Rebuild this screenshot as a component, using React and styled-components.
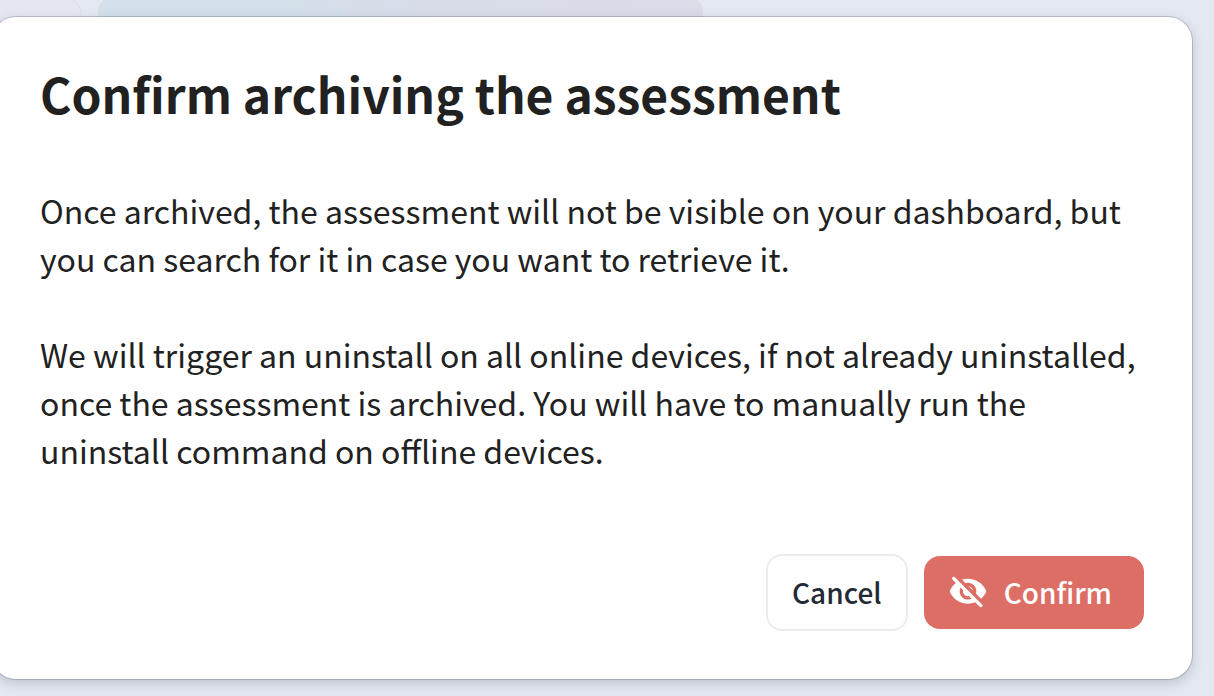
import React from "react";
import styled, { createGlobalStyle } from "styled-components";

const GlobalStyle = createGlobalStyle`
  *, *::before, *::after { box-sizing: border-box; }
  body {
    margin: 0;
    background: #e4e8f1;
    font-family: "Noto Sans CJK JP", "Noto Sans", sans-serif;
    color: #212121;
  }
`;

const Page = styled.div`
  position: relative;
  min-height: 100vh;
  overflow: hidden;
  padding: 17px 22px 17px 0;
`;

const Backdrop = styled.div`
  position: absolute;
  top: -4px;
  left: 0;
  right: 0;
  height: 80px;
  display: flex;
  gap: 16px;
`;

const SideCard = styled.div`
  width: 82px;
  border: 1px solid #dcdfe9;
  border-left: 0;
  border-radius: 0 20px 0 0;
  background: #e4e7f1;
`;

const BannerCard = styled.div`
  flex: 0 0 605px;
  border-radius: 16px 16px 0 0;
  background: linear-gradient(90deg, #d3e0eb 0%, #d3dfea 30%, #d8dce9 55%, #dadce8 100%);
`;

const Dialog = styled.section`
  position: relative;
  margin-left: -8px;
  padding: 44px 48px 48px;
  border-radius: 24px;
  background: #fff;
  box-shadow: 0 0 0 1px rgba(60, 65, 80, 0.24), 0 4px 12px rgba(60, 65, 80, 0.24);
`;

const Title = styled.h1`
  margin: 0;
  font-size: 48px;
  font-weight: 700;
  line-height: 64px;
`;

const Message = styled.div`
  margin-top: 61px;
  display: grid;
  gap: 48px;
`;

const Paragraph = styled.p`
  margin: 0;
  font-size: 32px;
  line-height: 48px;
`;

const Actions = styled.footer`
  margin-top: 80px;
  display: flex;
  justify-content: flex-end;
  align-items: center;
  gap: 16px;
`;

const Button = styled.button`
  display: flex;
  align-items: center;
  justify-content: center;
  gap: 16px;
  height: ${({ $danger }) => ($danger ? 73 : 77)}px;
  padding: ${({ $danger }) => ($danger ? "0 32px 2px 24px" : "0 24px 2px")};
  border: ${({ $danger }) => ($danger ? "0" : "2px solid #ececec")};
  border-radius: 16px;
  background: ${({ $danger }) => ($danger ? "#dd6e66" : "#fff")};
  color: ${({ $danger }) => ($danger ? "#fff" : "#242a35")};
  font-family: inherit;
  font-size: 28px;
  font-weight: 500;
  line-height: 40px;
  cursor: pointer;
`;

const Icon = styled.svg`
  width: 40px;
  height: 40px;
  fill: currentColor;
`;

function EyeOffIcon() {
  return (
    <Icon viewBox="0 0 24 24" aria-hidden="true">
      <path d="M12 6.5c2.76 0 5 2.24 5 5 0 .51-.1 1-.24 1.46l3.06 3.06c1.39-1.23 2.49-2.77 3.18-4.53C21.27 7.11 17 4 12 4c-1.27 0-2.49.2-3.64.57l2.17 2.17c.47-.14.96-.24 1.47-.24zM2.71 3.16c-.39.39-.39 1.02 0 1.41l1.97 1.97C3.06 7.83 1.77 9.53 1 11.5 2.73 15.89 7 19 12 19c1.52 0 2.97-.3 4.31-.82l2.72 2.72c.39.39 1.02.39 1.41 0 .39-.39.39-1.02 0-1.41L4.13 3.16c-.39-.39-1.03-.39-1.42 0zM12 16.5c-2.76 0-5-2.24-5-5 0-.77.18-1.5.49-2.14l1.57 1.57c-.03.18-.06.37-.06.57 0 1.66 1.34 3 3 3 .2 0 .38-.03.57-.07L14.14 16c-.65.32-1.37.5-2.14.5zm2.97-5.33c-.15-1.4-1.25-2.49-2.64-2.64l2.64 2.64z" />
    </Icon>
  );
}

export default function App() {
  return (
    <>
      <GlobalStyle />
      <Page>
        <Backdrop aria-hidden="true">
          <SideCard />
          <BannerCard />
        </Backdrop>
        <Dialog role="dialog" aria-modal="true" aria-labelledby="dialog-title">
          <Title id="dialog-title">Confirm archiving the assessment</Title>
          <Message>
            <Paragraph>
              Once archived, the assessment will not be visible on your dashboard, but you can
              search for it in case you want to retrieve it.
            </Paragraph>
            <Paragraph>
              We will trigger an uninstall on all online devices, if not already uninstalled, once
              the assessment is archived. You will have to manually run the uninstall command on
              offline devices.
            </Paragraph>
          </Message>
          <Actions>
            <Button type="button">Cancel</Button>
            <Button type="button" $danger>
              <EyeOffIcon />
              Confirm
            </Button>
          </Actions>
        </Dialog>
      </Page>
    </>
  );
}
